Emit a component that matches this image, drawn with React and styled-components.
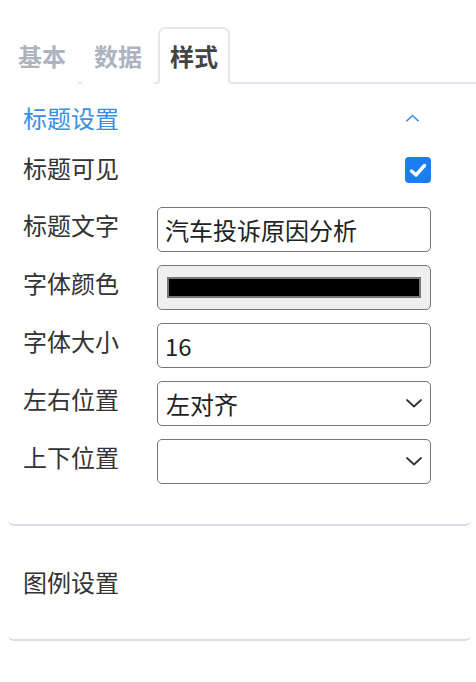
import React from "react";
import styled, { createGlobalStyle } from "styled-components";

const GlobalStyle = createGlobalStyle`
  html, body {
    margin: 0;
    padding: 0;
    background: #fff;
  }
  body {
    font-family: "Noto Sans CJK SC", "Noto Sans", sans-serif;
    color: #333;
  }
`;

const Page = styled.div`
  width: 476px;
  padding-top: 27px;
`;

const TabBar = styled.div`
  display: flex;
  gap: 4px;
  margin-left: 6px;
  border-bottom: 2px solid #e3e7ee;
`;

const Tab = styled.div`
  width: 72px;
  box-sizing: border-box;
  padding: 9px 0 8px;
  margin-bottom: -2px;
  text-align: center;
  font-size: 24px;
  line-height: 36px;
  font-weight: 700;
  color: ${(p) => (p.active ? "#444" : "#adb3bf")};
  border: 2px solid ${(p) => (p.active ? "#e3e7ee" : "transparent")};
  border-bottom-color: ${(p) => (p.active ? "#fff" : "transparent")};
  border-radius: 7px 7px 0 0;
  background: #fff;
`;

const Card = styled.div`
  margin: 0 5px 0 8px;
  padding: ${(p) => p.pad || "0"};
  border-bottom: 2px solid #d8dde7;
  border-radius: 0 0 6px 6px;
`;

const SectionHeader = styled.div`
  display: flex;
  align-items: center;
  justify-content: space-between;
  padding: ${(p) => p.top ?? 16}px 52px 0 15px;
  font-size: 24px;
  line-height: 36px;
  color: ${(p) => p.color || "#333"};
`;

const Form = styled.div`
  display: flex;
  flex-direction: column;
  padding: 0 40px 40px 15px;
`;

const Row = styled.div`
  display: grid;
  grid-template-columns: 134px 1fr;
  align-items: start;
  margin-top: ${(p) => p.mt || 13}px;
`;

const Label = styled.div`
  font-size: 24px;
  line-height: 36px;
  color: #333;
`;

const Field = styled.div`
  height: 45px;
  box-sizing: border-box;
  border: 1.5px solid #767676;
  border-radius: 5px;
  background: ${(p) => p.bg || "#fff"};
  display: flex;
  align-items: center;
  justify-content: space-between;
  padding: 0 8px 0 8px;
  font-size: 24px;
  color: #222;
`;

const TextInput = styled.input`
  height: 45px;
  width: 100%;
  box-sizing: border-box;
  border: 1.5px solid #767676;
  border-radius: 5px;
  padding: 0 7px;
  font-family: "Noto Sans CJK SC", "Noto Sans", sans-serif;
  font-size: 24px;
  color: #222;
  outline: none;
  background: #fff;
`;

const Swatch = styled.div`
  flex: 1;
  height: 21px;
  box-sizing: border-box;
  border: 2px solid #777;
  background: #000;
  margin: 0 1px;
`;

const CheckWrap = styled.div`
  display: flex;
  justify-content: flex-end;
  padding-top: 7px;
`;

const CheckBox = styled.div`
  width: 26px;
  height: 26px;
  border-radius: 4px;
  background: #1c7cf4;
  display: flex;
  align-items: center;
  justify-content: center;
`;

const Chevron = ({ up, color = "#333", w = 16, h = 9 }) => (
  <svg width={w} height={h} viewBox="0 0 16 9" fill="none">
    <path
      d={up ? "M1 8 L8 1.5 L15 8" : "M1 1 L8 7.5 L15 1"}
      stroke={color}
      strokeWidth="1.8"
      strokeLinecap="round"
      strokeLinejoin="round"
    />
  </svg>
);

export default function App() {
  return (
    <Page>
      <GlobalStyle />
      <TabBar>
        <Tab>基本</Tab>
        <Tab>数据</Tab>
        <Tab active>样式</Tab>
      </TabBar>

      <Card>
        <SectionHeader color="#3a8ee6">
          <span>标题设置</span>
          <Chevron up color="#3a8ee6" w={13} h={8} />
        </SectionHeader>
        <Form>
          <Row mt={14}>
            <Label>标题可见</Label>
            <CheckWrap>
              <CheckBox>
                <svg width="18" height="15" viewBox="0 0 18 15">
                  <path
                    d="M2.5 8 L7 12 L15.5 2.5"
                    stroke="#fff"
                    strokeWidth="3.4"
                    fill="none"
                    strokeLinecap="round"
                    strokeLinejoin="round"
                  />
                </svg>
              </CheckBox>
            </CheckWrap>
          </Row>
          <Row mt={21}>
            <Label>标题文字</Label>
            <TextInput defaultValue="汽车投诉原因分析" />
          </Row>
          <Row>
            <Label>字体颜色</Label>
            <Field bg="#efefef">
              <Swatch />
            </Field>
          </Row>
          <Row>
            <Label>字体大小</Label>
            <TextInput defaultValue="16" />
          </Row>
          <Row>
            <Label>左右位置</Label>
            <Field>
              <span>左对齐</span>
              <Chevron />
            </Field>
          </Row>
          <Row>
            <Label>上下位置</Label>
            <Field>
              <span />
              <Chevron />
            </Field>
          </Row>
        </Form>
      </Card>

      <Card pad="38px 0 39px">
        <SectionHeader top={0}>
          <span>图例设置</span>
        </SectionHeader>
      </Card>
    </Page>
  );
}
